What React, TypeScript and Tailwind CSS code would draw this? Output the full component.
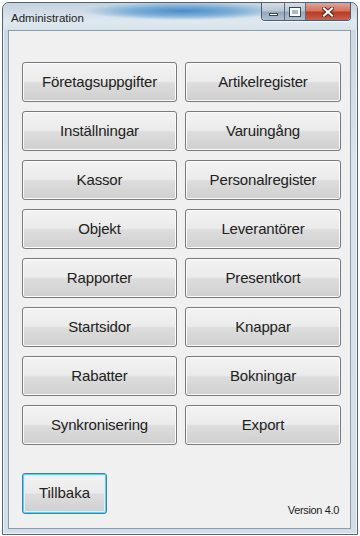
const items: [string, string][] = [
  ['Företagsuppgifter', 'Artikelregister'],
  ['Inställningar', 'Varuingång'],
  ['Kassor', 'Personalregister'],
  ['Objekt', 'Leverantörer'],
  ['Rapporter', 'Presentkort'],
  ['Startsidor', 'Knappar'],
  ['Rabatter', 'Bokningar'],
  ['Synkronisering', 'Export'],
];

const btn =
  'h-[40px] rounded-[3px] border border-[#7a7a7a] bg-[linear-gradient(#f3f3f3_0%,#ebebeb_48%,#dddddd_52%,#cfcfcf_100%)] shadow-[inset_0_0_0_1px_#fbfbfb] text-[15px] tracking-[-0.15px] text-[#222] flex items-center justify-center';

const glass =
  'bg-[linear-gradient(#d4dde6_0%,#b9c6d3_45%,#95a8ba_55%,#aebfcf_100%)]';

const CaptionButtons = () => (
  <div className="flex h-[18px] mr-[6px] rounded-b-[4px] border border-t-0 border-[#4e5b69] overflow-hidden shadow-[0_1px_0_#ffffffaa]">
    {/* minimize */}
    <div className={`w-[23px] h-full flex items-end justify-center pb-[4px] border-r border-[#5e6b78] ${glass}`}>
      <div className="w-[9px] h-[3px] bg-white border border-[#3b4756]" />
    </div>
    {/* maximize */}
    <div className={`w-[21px] h-full flex items-center justify-center border-r border-[#5e6b78] ${glass}`}>
      <div className="w-[10px] h-[8px] border-2 border-white outline outline-1 outline-[#3b4756] bg-[#a9b9c8]" />
    </div>
    {/* close */}
    <div className="w-[44px] h-full flex items-center justify-center bg-[linear-gradient(#e2a497_0%,#d3745f_45%,#bb3a22_55%,#cc604a_100%)]">
      <svg width="12" height="10" viewBox="0 0 12 10">
        <path d="M2 1.5 L10 8.5 M10 1.5 L2 8.5" stroke="#4a1a12" strokeWidth="4" strokeLinecap="square" />
        <path d="M2 1.5 L10 8.5 M10 1.5 L2 8.5" stroke="#ffffff" strokeWidth="2.2" strokeLinecap="square" />
      </svg>
    </div>
  </div>
);

export default function App() {
  return (
    <div className="w-[360px] h-[536px] bg-white pt-[2px] pl-[2px] font-['Liberation_Sans',Arial,sans-serif]">
      <div className="w-[356px] h-[533px] rounded-t-[7px] border border-[#56626e] bg-[linear-gradient(#c8d5e1,#d9e3ec_30%,#d2dde7)] flex flex-col shadow-[inset_0_0_0_1px_#eef4f8]">
        {/* Title bar */}
        <div className="h-[27px] flex items-start justify-between rounded-t-[6px] bg-[radial-gradient(ellipse_100px_9px_at_180px_8px,#4a8cc6,#7fb0d8_55%,transparent),linear-gradient(#c3d2df,#dfe8ef_70%,#d6e2ea)]">
          <span className="mt-[8px] ml-[8px] text-[11.5px] leading-[14px] text-[#1e1e1e]">
            Administration
          </span>
          <CaptionButtons />
        </div>

        {/* Client area */}
        <div className="ml-[5px] w-[343px] h-[499px] border border-[#8d9cab] bg-[#f0f0f0] pt-[31px] pl-[13px] pr-[8px] flex flex-col">
          <div className="grid grid-cols-[155px_156px] gap-x-[8px] gap-y-[9px]">
            {items.flatMap(([a, b]) => [
              <div key={a} className={btn}>{a}</div>,
              <div key={b} className={btn}>{b}</div>,
            ])}
          </div>

          <div className="mt-[28px] flex items-end justify-between">
            <div className="w-[85px] h-[41px] rounded-[3px] border border-[#3c7fb1] bg-[linear-gradient(#f3f3f3_0%,#ebebeb_48%,#dddddd_52%,#cfcfcf_100%)] shadow-[inset_0_0_0_1px_#5fd0f5,inset_0_0_0_2px_#d9f2fb] text-[15px] text-[#222] flex items-center justify-center">
              Tillbaka
            </div>
            <span className="mb-[-4px] mr-[3px] text-[11px] tracking-[-0.35px] text-[#1e1e1e]">Version 4.0</span>
          </div>
        </div>
      </div>
    </div>
  );
}
